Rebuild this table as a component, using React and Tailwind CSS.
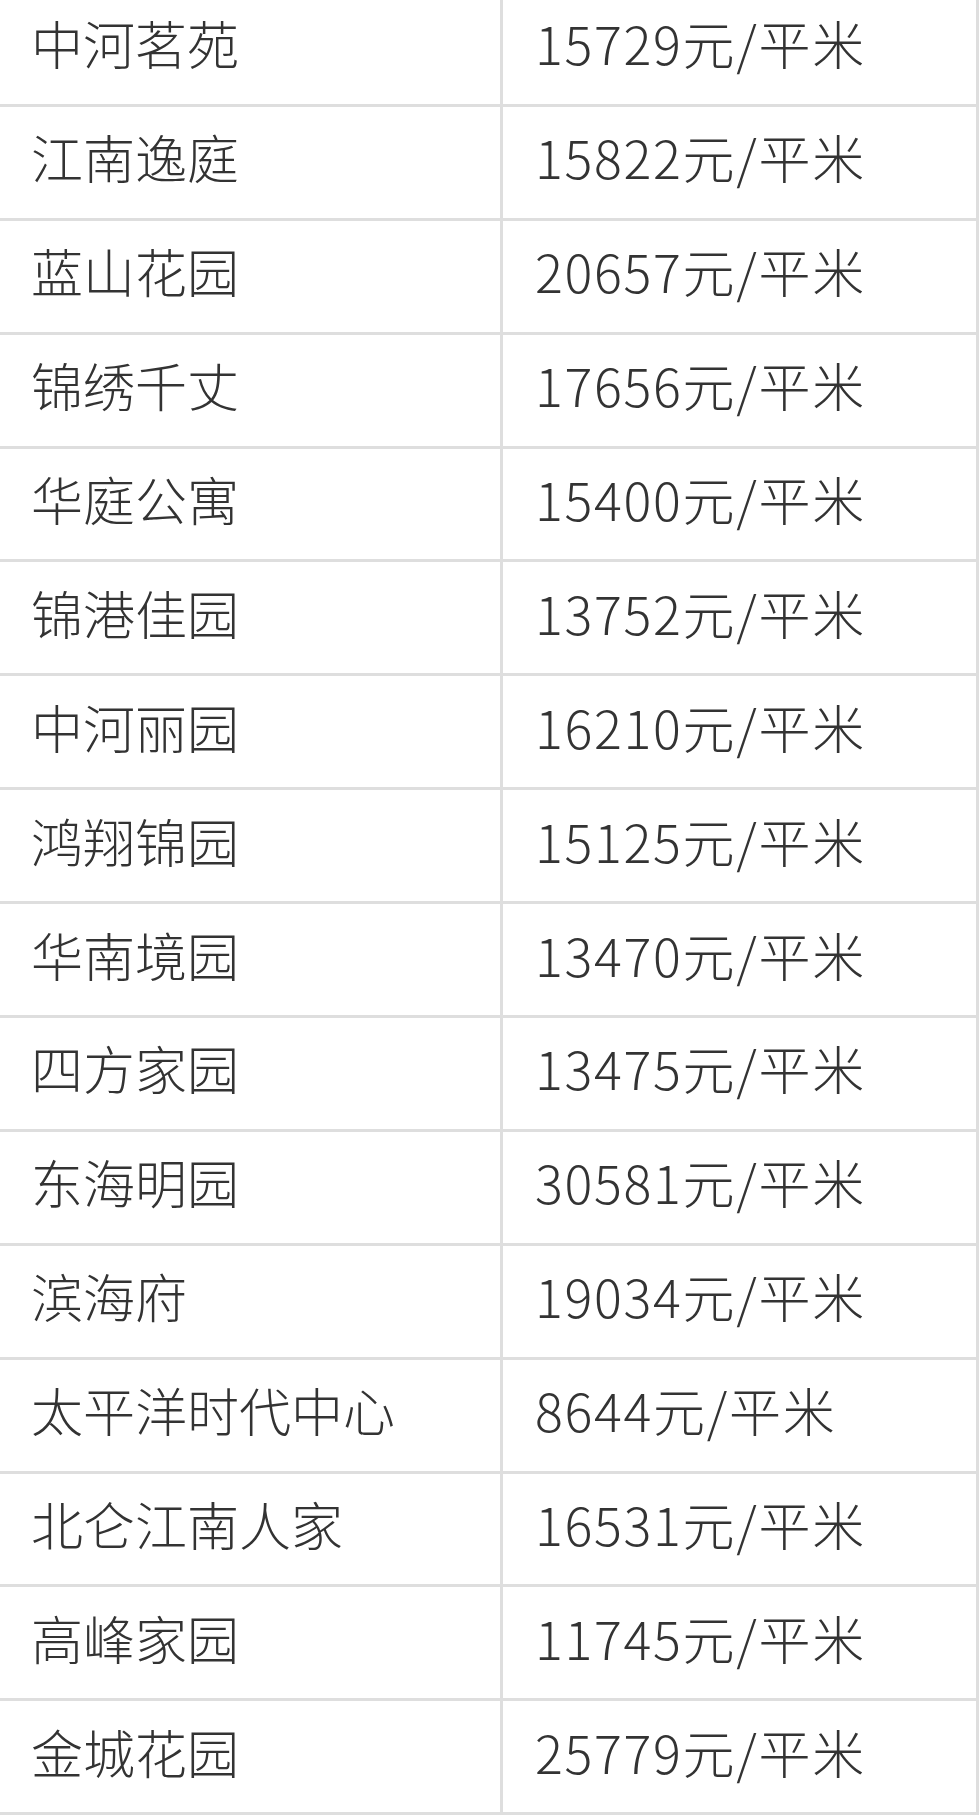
const rows = [
  ['中河茗苑', '15729元/平米'],
  ['江南逸庭', '15822元/平米'],
  ['蓝山花园', '20657元/平米'],
  ['锦绣千丈', '17656元/平米'],
  ['华庭公寓', '15400元/平米'],
  ['锦港佳园', '13752元/平米'],
  ['中河丽园', '16210元/平米'],
  ['鸿翔锦园', '15125元/平米'],
  ['华南境园', '13470元/平米'],
  ['四方家园', '13475元/平米'],
  ['东海明园', '30581元/平米'],
  ['滨海府', '19034元/平米'],
  ['太平洋时代中心', '8644元/平米'],
  ['北仑江南人家', '16531元/平米'],
  ['高峰家园', '11745元/平米'],
  ['金城花园', '25779元/平米'],
];

export default function App() {
  return (
    <div className="w-[980px] h-[1816px] overflow-hidden bg-white">
      <div className="-mt-[7px] w-[979px] border-r-[3px] border-[#dedede] font-['Noto_Sans_CJK_SC',sans-serif] font-light text-[52px] text-[#333333]">
        {rows.map(([name, price]) => (
          <div key={name} className="flex h-[113.9px] border-b-[3px] border-[#dedede]">
            <div className="flex w-[500px] items-center pl-[31px] pb-[10px]">{name}</div>
            <div className="flex flex-1 items-center border-l-[3px] border-[#dedede] pl-[32px] pb-[10px] tracking-[1.7px]">{price}</div>
          </div>
        ))}
      </div>
    </div>
  );
}
